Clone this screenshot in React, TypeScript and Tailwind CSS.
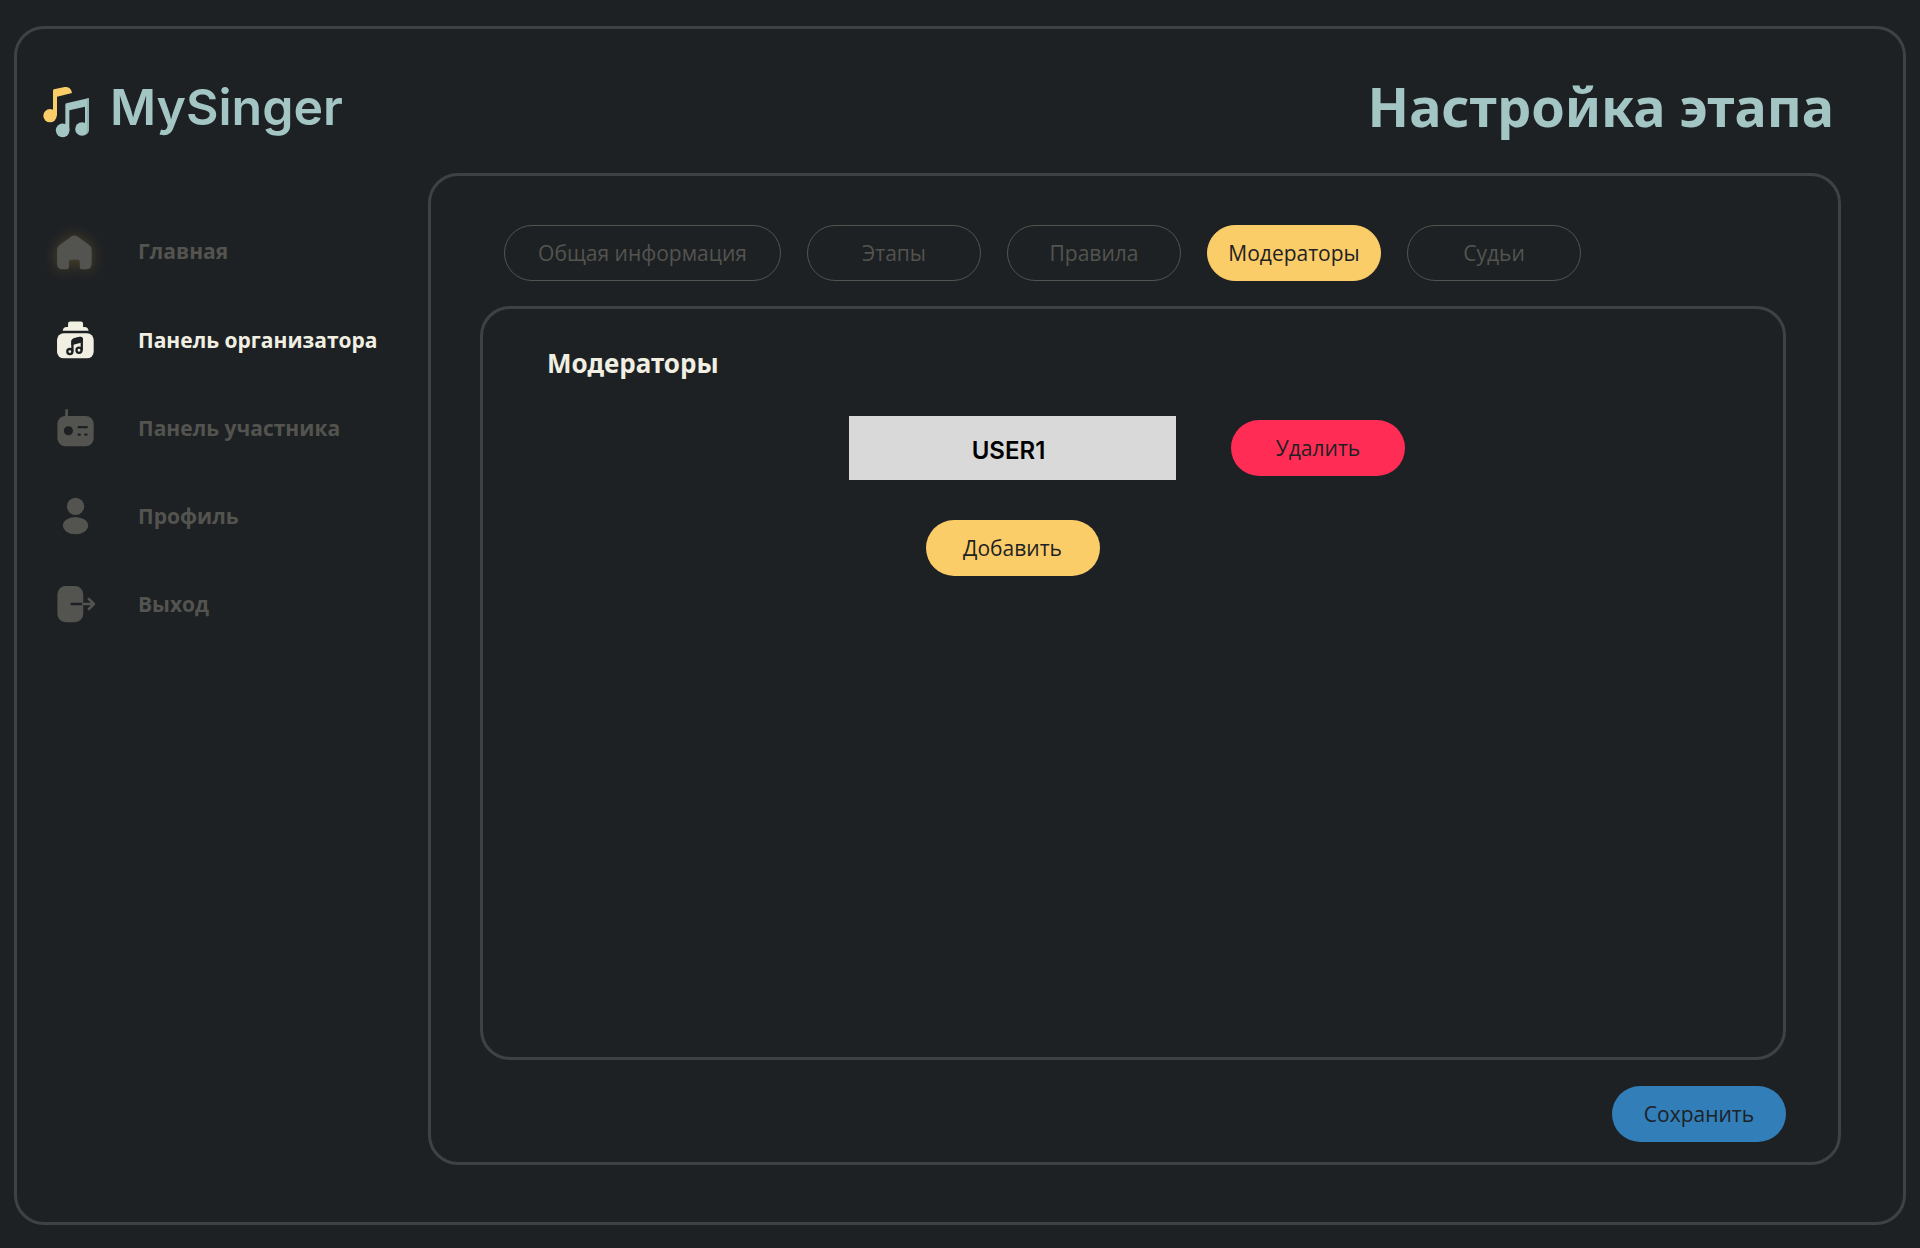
import type { ReactNode } from "react";

function LogoMark() {
  return (
    <svg viewBox="38 50 141 156" className="h-[52px] w-[47px] shrink-0" aria-hidden="true">
      <g fill="#fbcd68">
        <circle cx="59" cy="139" r="20" />
        <path d="M68 64q0-3 3-4l32-7q8-1 14 3 8 6 8 15l-45 11v57H68z" />
      </g>
      <g fill="#a3c6c4">
        <circle cx="97" cy="183" r="20.500" />
        <circle cx="155" cy="179" r="20.500" />
        <path d="M105 106q0-3 3-4l65-15q3-1 3 2v90h-12v-67l-47 11v60h-12z" />
      </g>
      <path d="M170 88l3-1q3-1 3 2v90q0 13-11 18 5-8 5-18z" fill="#8fb5b3" />
    </svg>
  );
}

function Icon({ children, className = "" }: { children: ReactNode; className?: string }) {
  return (
    <svg viewBox="0 0 24 24" className={`size-11 shrink-0 overflow-visible ${className}`} fill="currentColor" aria-hidden="true">
      {children}
    </svg>
  );
}

const HomeIcon = () => (
  <Icon className="drop-shadow-[0_0_7px_rgba(251,190,60,0.22)]">
    <path d="M10.200 4 Q11.700 3 13.200 4 L19.900 8.900 Q21.100 9.800 21.100 11.200 V18.800 Q21.100 22 17.900 22 H16 Q14.600 22 14.600 20.600 V18 Q14.600 16.800 13.400 16.800 H9.900 Q8.700 16.800 8.700 18 V20.600 Q8.700 22 7.300 22 H5.400 Q2.200 22 2.200 18.800 V11.200 Q2.200 9.800 3.400 8.900 Z" />
  </Icon>
);

const OrganizerIcon = () => (
  <Icon>
    <path d="M8.200 4.900 V3.100 Q8.200 1.900 9.400 1.900 H15.200 Q16.400 1.900 16.400 3.100 V4.900 H17.200 Q19.200 4.900 19.400 7 H5.300 Q5.500 4.900 7.400 4.900 Z" />
    <rect x="2.200" y="8.300" width="20" height="13.700" rx="3.600" />
    <g fill="none" stroke="#1e2124" strokeWidth="1.250">
      <circle cx="9.200" cy="18.300" r="1.400" />
      <circle cx="14.200" cy="17.600" r="1.400" />
      <path d="M10.600 18.300V12.800Q10.600 12 11.400 11.700L14.500 10.900Q15.700 10.700 15.700 11.800V17.600" />
    </g>
    <path d="M10 12.500Q10.200 11.600 11.200 11.200L14.600 10.300Q16.300 10.100 16.300 11.700V13.200L10 14.900Z" fill="#1e2124" />
  </Icon>
);

const RadioIcon = () => (
  <Icon>
    <rect x="2.400" y="5.400" width="19.800" height="16.600" rx="4.400" />
    <path d="M7.400 2.400V7" stroke="currentColor" strokeWidth="1.500" strokeLinecap="round" />
    <circle cx="8.400" cy="13.500" r="2.500" fill="#1e2124" />
    <path d="M14 11.500H18.400M14 15.600H14.600M17.600 15.600H18.300" stroke="#1e2124" strokeWidth="1.300" strokeLinecap="round" />
  </Icon>
);

const ProfileIcon = () => (
  <Icon>
    <circle cx="12.300" cy="6.700" r="4.700" />
    <ellipse cx="12.300" cy="17.200" rx="6.900" ry="4.700" />
  </Icon>
);

const ExitIcon = () => (
  <Icon>
    <rect x="2.400" y="2.200" width="14.100" height="19.700" rx="4.500" />
    <path d="M10.200 12H16.500" stroke="#1e2124" strokeWidth="1.400" strokeLinecap="round" />
    <path d="M16.500 12H22M19.500 9.200L22.300 12L19.500 14.800" fill="none" stroke="currentColor" strokeWidth="1.400" strokeLinecap="round" strokeLinejoin="round" />
  </Icon>
);

const navItems = [
  { label: "Главная", icon: <HomeIcon /> },
  { label: "Панель организатора", icon: <OrganizerIcon />, active: true },
  { label: "Панель участника", icon: <RadioIcon /> },
  { label: "Профиль", icon: <ProfileIcon /> },
  { label: "Выход", icon: <ExitIcon /> },
];

const tabs = [
  { label: "Общая информация", width: "w-[277px]" },
  { label: "Этапы", width: "w-[174px]" },
  { label: "Правила", width: "w-[174px]" },
  { label: "Модераторы", width: "w-[174px]", active: true },
  { label: "Судьи", width: "w-[174px]" },
];

const moderators = ["USER1"];

function PillButton({ children, className }: { children: ReactNode; className: string }) {
  return (
    <button type="button" className={`h-14 w-[174px] rounded-full pt-0.5 text-[21px] text-[#1e2124] ${className}`}>
      {children}
    </button>
  );
}

export default function App() {
  return (
    <div className="flex min-h-screen bg-[#1e2124] pt-[26px] pr-[14px] pb-[23px] pl-[14px] font-['Open_Sans',sans-serif] text-[#f0efe2]">
      <div className="flex flex-1 flex-col rounded-[30px] border-3 border-[#3e4244]">
        <header className="flex h-[144px] items-center justify-between pr-[69px] pl-[26px] text-[#a3c6c4]">
          <a href="#" className="flex items-center gap-5 pt-[22px]">
            <LogoMark />
            <span className="pb-2.5 font-['Inter',sans-serif] text-[50px] leading-none font-semibold">MySinger</span>
          </a>
          <h1 className="pt-2.5 font-['Noto_Sans',sans-serif] text-[54px] leading-none font-bold">Настройка этапа</h1>
        </header>

        <div className="flex flex-1 pr-[62px] pb-[57px]">
          <nav aria-label="Основное меню" className="w-[411px] shrink-0 pt-14 pl-9">
            <ul className="flex flex-col gap-11">
              {navItems.map((item) => (
                <li key={item.label} className="first:mb-px">
                  <a
                    href="#"
                    aria-current={item.active ? "page" : undefined}
                    className={`flex h-11 items-center gap-[41px] text-[21px] font-bold ${item.active ? "text-[#f0efe2]" : "text-[#53544f]"}`}
                  >
                    {item.icon}
                    <span className="pt-0.5 whitespace-nowrap">{item.label}</span>
                  </a>
                </li>
              ))}
            </ul>
          </nav>

          <main className="flex flex-1 flex-col rounded-[30px] border-3 border-[#3e4244] pt-[49px] pr-[52px] pb-5 pl-[49px]">
            <div role="tablist" className="flex gap-[26px] pl-6">
              {tabs.map((tab) => (
                <button
                  key={tab.label}
                  type="button"
                  role="tab"
                  aria-selected={Boolean(tab.active)}
                  className={`h-14 rounded-full border pt-0.5 text-[21px] ${tab.width} ${
                    tab.active ? "border-[#fbcd68] bg-[#fbcd68] text-[#1e2124]" : "border-[#53544f] text-[#53544f]"
                  }`}
                >
                  {tab.label}
                </button>
              ))}
            </div>

            <section className="mt-[25px] flex-1 rounded-[30px] border-3 border-[#3e4244] pt-9">
              <h2 className="pl-16 font-['Noto_Sans',sans-serif] text-[26px] leading-9 font-bold">Модераторы</h2>
              <div className="mt-[35px] flex flex-col items-center pr-3">
                <div className="grid grid-cols-[327px_174px] items-center gap-x-[55px] gap-y-10">
                  {moderators.map((name) => (
                    <div key={name} className="contents">
                      <p className="flex h-16 items-center justify-center bg-[#d9d9d9] pt-1.5 pr-2 font-['Inter',sans-serif] text-2xl font-semibold text-black">
                        {name}
                      </p>
                      <PillButton className="bg-[#ff2d55]">Удалить</PillButton>
                    </div>
                  ))}
                  <PillButton className="justify-self-center bg-[#fbcd68]">Добавить</PillButton>
                </div>
              </div>
            </section>

            <div className="mt-[26px] flex justify-end">
              <PillButton className="bg-[#317eb8]">Сохранить</PillButton>
            </div>
          </main>
        </div>
      </div>
    </div>
  );
}
